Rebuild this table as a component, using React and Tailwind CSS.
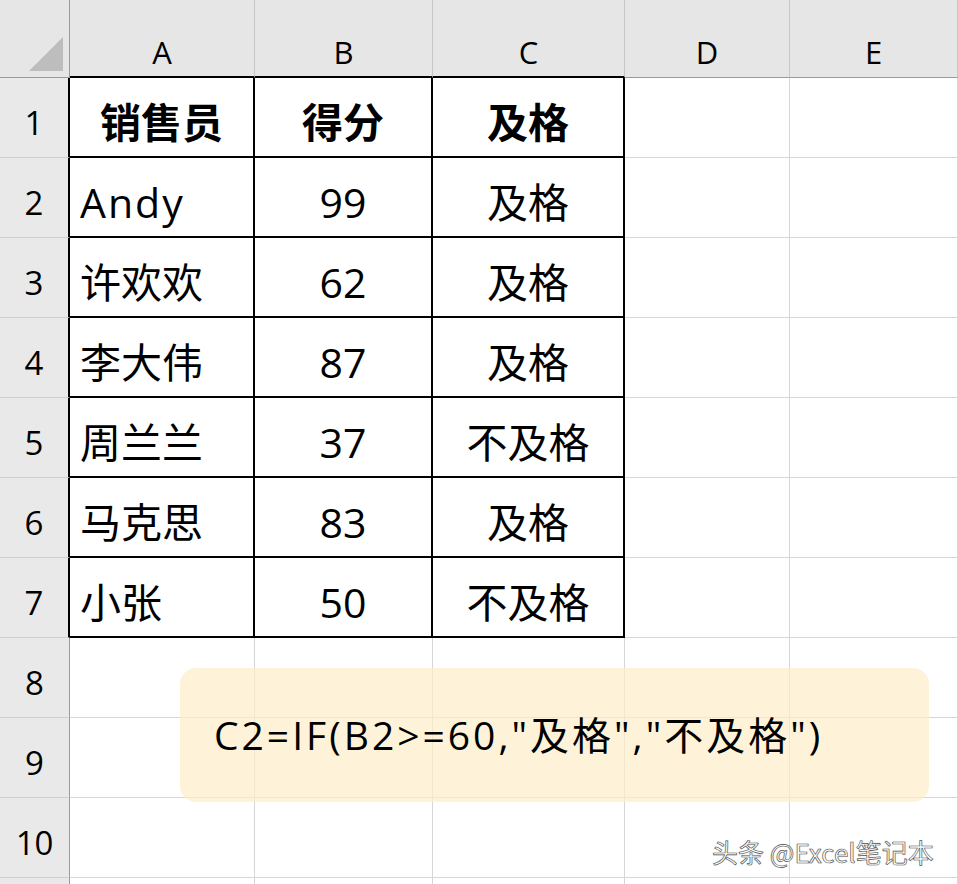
import React from "react";

const cols = ["A", "B", "C", "D", "E"];
const data = [
  ["销售员", "得分", "及格"],
  ["Andy", "99", "及格"],
  ["许欢欢", "62", "及格"],
  ["李大伟", "87", "及格"],
  ["周兰兰", "37", "不及格"],
  ["马克思", "83", "及格"],
  ["小张", "50", "不及格"],
];

const font = { fontFamily: '"Open Sans", "Noto Sans CJK SC", sans-serif' };

export default function App() {
  const rows = [];
  for (let r = 1; r <= 11; r++) rows.push(r);
  return (
    <div className="relative w-[958px] h-[884px] overflow-hidden bg-white text-black" style={font}>
      <div className="grid grid-cols-[70px_185px_178px_192px_165px_168px] grid-rows-[78px_repeat(10,80px)_6px]">
        {/* header row */}
        <div className="relative bg-[#e6e6e6] border-r border-b border-[#9a9a9a]">
          <svg className="absolute left-[29px] top-[37px]" width="34" height="34" viewBox="0 0 34 34">
            <polygon points="34,0 34,34 0,34" fill="#bdbdbd" />
          </svg>
        </div>
        {cols.map((c, i) => (
          <div
            key={c}
            className={
              "flex items-center justify-center bg-[#e6e6e6] border-r border-[#c6c6c6] text-[31px] pt-[28px] " +
              (i < 3 ? "border-b-2 border-b-black" : "border-b border-b-[#9a9a9a]")
            }
          >
            {c}
          </div>
        ))}
        {rows.map((r) => {
          const inTable = r <= 7;
          return (
            <React.Fragment key={r}>
              <div
                className={
                  "flex items-center justify-center bg-[#e9e9e9] border-b border-b-[#cfcfcf] text-[33px] pt-[10px] " +
                  (inTable ? "border-r-2 border-r-black" : "border-r border-r-[#9a9a9a]")
                }
              >
                {r <= 10 ? r : ""}
              </div>
              {cols.map((c, ci) => {
                const tcell = inTable && ci < 3;
                const txt = tcell ? data[r - 1][ci] : "";
                const bold = r === 1;
                let cls = "flex items-center pt-[12px] ";
                if (tcell) {
                  cls += "border-r-2 border-b-2 border-black ";
                  cls += ci === 0 && !bold ? "justify-start pl-[10px] " : "justify-center ";
                } else {
                  cls += "border-b border-b-[#d6d6d6] border-r border-r-[#d6d6d6] ";
                }
                cls += bold ? "font-bold text-[41px] " : "text-[41px] ";
                if (txt === "Andy") cls += "tracking-[2px] ";
                return (
                  <div key={c} className={cls}>
                    {txt}
                  </div>
                );
              })}
            </React.Fragment>
          );
        })}
      </div>

      {/* formula callout */}
      <div className="absolute left-[180px] top-[668px] w-[749px] h-[134px] rounded-[16px] bg-[#fdeec8]/70 flex items-center pl-[34px]">
        <span className="text-[39px] tracking-[3px]">C2=IF(B2&gt;=60,"及格","不及格")</span>
      </div>

      {/* watermark */}
      <div
        className="absolute left-[712px] top-[832px] text-[26px] text-white"
        style={{ WebkitTextStroke: "0.6px #555", textShadow: "0 0 1px #888", fontFamily: '"Noto Sans CJK SC", sans-serif' }}
      >
        头条 @Excel笔记本
      </div>
    </div>
  );
}
